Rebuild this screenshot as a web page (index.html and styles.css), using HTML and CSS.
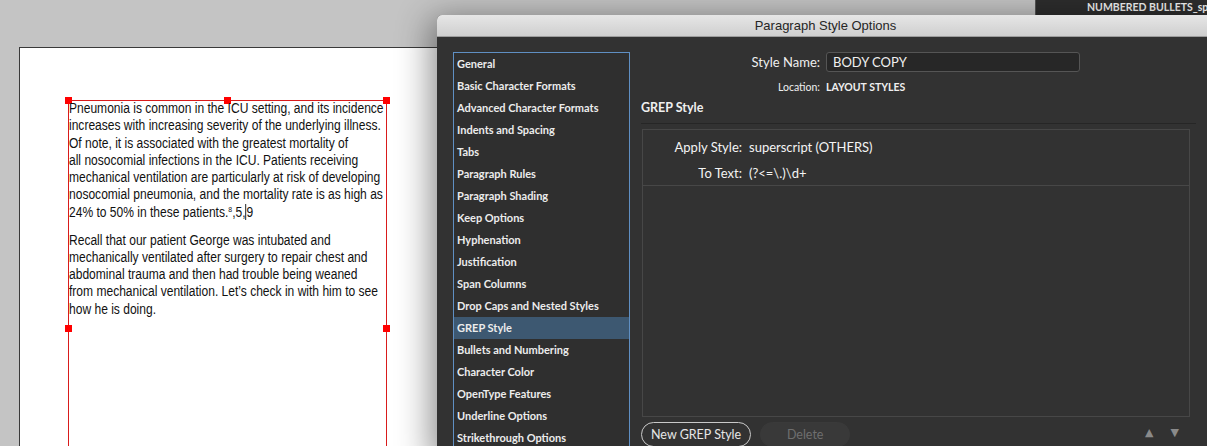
FILE: index.html
```html
<!DOCTYPE html>
<html lang="en">
<head>
  <meta charset="UTF-8">
  <title>Paragraph Style Options</title>
  <link rel="stylesheet" href="styles.css">
</head>
<body>

<div class="desk">
  <div class="panel-tab">NUMBERED BULLETS_split</div>

  <div class="sheet">
    <div class="frame">
      <span class="handle h-tl"></span>
      <span class="handle h-tm"></span>
      <span class="handle h-tr"></span>
      <span class="handle h-ml"></span>
      <span class="handle h-mr"></span>

      <p class="copy">
        Pneumonia is common in the ICU setting, and its incidence<br>
        increases with increasing severity of the underlying illness.<br>
        Of note, it is associated with the greatest mortality of<br>
        all nosocomial infections in the ICU. Patients receiving<br>
        mechanical ventilation are particularly at risk of developing<br>
        nosocomial pneumonia, and the mortality rate is as high as<br>
        24% to 50% in these patients.<sup>8</sup>,5,<span class="caret"></span>9
      </p>
      <p class="copy">
        Recall that our patient George was intubated and<br>
        mechanically ventilated after surgery to repair chest and<br>
        abdominal trauma and then had trouble being weaned<br>
        from mechanical ventilation. Let’s check in with him to see<br>
        how he is doing.
      </p>
    </div>
  </div>

  <div class="dialog">
    <div class="titlebar">Paragraph Style Options</div>
    <div class="dlg-body">
      <ul class="cat-list">
        <li>General</li>
        <li>Basic Character Formats</li>
        <li>Advanced Character Formats</li>
        <li>Indents and Spacing</li>
        <li>Tabs</li>
        <li>Paragraph Rules</li>
        <li>Paragraph Shading</li>
        <li>Keep Options</li>
        <li>Hyphenation</li>
        <li>Justification</li>
        <li>Span Columns</li>
        <li>Drop Caps and Nested Styles</li>
        <li class="selected">GREP Style</li>
        <li>Bullets and Numbering</li>
        <li>Character Color</li>
        <li>OpenType Features</li>
        <li>Underline Options</li>
        <li>Strikethrough Options</li>
      </ul>

      <div class="pane">
        <div class="field-row">
          <span class="field-label">Style Name:</span>
          <div class="text-input">BODY COPY</div>
        </div>
        <div class="field-row location">
          <span class="field-label">Location:</span>
          <span>LAYOUT STYLES</span>
        </div>

        <h3 class="section-title">GREP Style</h3>

        <div class="grep-box">
          <div class="grep-rule">
            <div class="kv"><span class="k">Apply Style:</span><span>superscript (OTHERS)</span></div>
            <div class="kv"><span class="k">To Text:</span><span>(?&lt;=\.)\d+</span></div>
          </div>
        </div>

        <div class="actions">
          <button class="pill">New GREP Style</button>
          <button class="pill disabled">Delete</button>
          <div class="arrows">
            <span>&#9650;</span>
            <span>&#9660;</span>
          </div>
        </div>
      </div>
    </div>
  </div>
</div>

</body>
</html>
```

FILE: styles.css
```css
html, body {
  margin: 0;
  padding: 0;
  overflow: hidden;
}

body {
  background: #c4c4c4;
  width: 1207px;
  height: 446px;
}

.desk {
  position: relative;
  width: 1207px;
  height: 446px;
  overflow: hidden;
}

/* panel tab peeking in at the top right */
.panel-tab {
  position: absolute;
  top: 0;
  right: 0;
  width: 120px;
  height: 15px;
  padding-left: 51px;
  background: #2d2d2d;
  border-left: 1px solid #555;
  color: #f2f2f2;
  font-family: Lato, "Open Sans", sans-serif;
  font-weight: 700;
  font-size: 10.5px;
  line-height: 15px;
  white-space: nowrap;
  overflow: hidden;
}

/* document page */
.sheet {
  position: absolute;
  left: 19px;
  top: 47px;
  width: 640px;
  height: 420px;
  background: #fff;
  border-top: 1px solid #3a3a3a;
  border-left: 1px solid #3a3a3a;
  padding: 52px 0 0 48px;
  box-sizing: border-box;
}

.frame {
  position: relative;
  width: 319px;
  height: 400px;
  border: 1px solid #d91b1b;
  border-bottom: none;
  box-sizing: border-box;
}

.handle {
  position: absolute;
  width: 7px;
  height: 7px;
  background: #f00;
}

.h-tl { left: -4px; top: -4px; }
.h-tm { left: 155px; top: -4px; }
.h-tr { right: -4px; top: -4px; }
.h-ml { left: -4px; top: 224px; }
.h-mr { right: -4px; top: 224px; }

/* condensed grotesque look: Arial metrics squeezed horizontally */
.copy {
  margin: -1px 0 10.5px 0;
  font-family: "Liberation Sans", Arial, sans-serif;
  font-size: 14px;
  line-height: 17.3px;
  color: #111;
  white-space: nowrap;
  transform: scaleX(0.86);
  transform-origin: left top;
}

.copy + .copy {
  margin-top: 0;
}

.copy sup {
  font-size: 8px;
  line-height: 0;
  vertical-align: 5px;
}

.caret {
  display: inline-block;
  width: 1px;
  height: 16px;
  background: #000;
  vertical-align: -3px;
}

/* dialog */
.dialog {
  position: absolute;
  left: 437px;
  top: 15px;
  width: 777px;
  height: 445px;
  background: #323232;
  border-radius: 5px 5px 0 0;
  box-shadow: -6px 4px 34px rgba(0, 0, 0, 0.45);
  font-family: Lato, "Open Sans", sans-serif;
  color: #efefef;
}

.titlebar {
  height: 21px;
  line-height: 21px;
  text-align: center;
  background: linear-gradient(#e6e6e6, #cfcfcf);
  border-bottom: 1px solid #9d9d9d;
  border-radius: 5px 5px 0 0;
  font-family: "Liberation Sans", Arial, sans-serif;
  font-size: 13px;
  color: #262626;
}

.dlg-body {
  display: flex;
  gap: 11px;
  padding: 15px 18px 0 16px;
}

.cat-list {
  list-style: none;
  margin: 0;
  padding: 0;
  width: 175px;
  height: 420px;
  flex: none;
  border: 1px solid #5f8fc3;
  background: #2f2f2f;
}

.cat-list li {
  height: 22px;
  line-height: 21px;
  padding-left: 3px;
  font-size: 11px;
  font-weight: 700;
  color: #ececec;
  white-space: nowrap;
}

.cat-list li.selected {
  background: #3d5871;
}

.pane {
  flex: 1;
  display: flex;
  flex-direction: column;
}

.field-row {
  display: flex;
  align-items: center;
  gap: 6px;
  height: 20px;
  font-size: 13px;
}

.field-label {
  width: 179px;
  text-align: right;
}

.text-input {
  width: 246px;
  height: 18px;
  line-height: 18px;
  padding-left: 6px;
  background: #272727;
  border: 1px solid #555;
  border-radius: 3px;
}

.field-row.location {
  margin-top: 7px;
  height: 16px;
  font-size: 10.5px;
  font-weight: 700;
}

.field-row.location .field-label {
  font-weight: 400;
}

.section-title {
  margin: 5px 0 0 0;
  height: 16px;
  line-height: 16px;
  font-size: 12.5px;
  font-weight: 700;
  padding-bottom: 7px;
  border-bottom: 1px solid #262626;
}

.grep-box {
  margin: 5px 6px 0 1px;
  height: 286px;
  border: 1px solid #474747;
}

.grep-rule {
  display: flex;
  flex-direction: column;
  gap: 10px;
  padding: 9px 0 4px 0;
  border-bottom: 1px solid #474747;
  font-size: 13px;
  color: #f4f4f4;
}

.kv {
  display: flex;
  gap: 7px;
  height: 16px;
  line-height: 16px;
}

.kv .k {
  width: 99px;
  text-align: right;
}

.actions {
  display: flex;
  align-items: center;
  gap: 9px;
  margin-top: 5px;
  margin-right: 6px;
}

.pill {
  height: 25px;
  padding: 0 9px;
  border: 1px solid #c9c9c9;
  border-radius: 13px;
  background: transparent;
  color: #e6e6e6;
  font-family: Lato, "Open Sans", sans-serif;
  font-size: 12.5px;
}

.pill.disabled {
  width: 90px;
  border-color: #3a3a3a;
  background: #393939;
  color: #6f6f6f;
}

.arrows {
  margin-left: auto;
  display: flex;
  gap: 17px;
  padding-right: 11px;
  margin-top: -4px;
  color: #8a8a8a;
  font-family: "DejaVu Sans", sans-serif;
  font-size: 11px;
}
```
